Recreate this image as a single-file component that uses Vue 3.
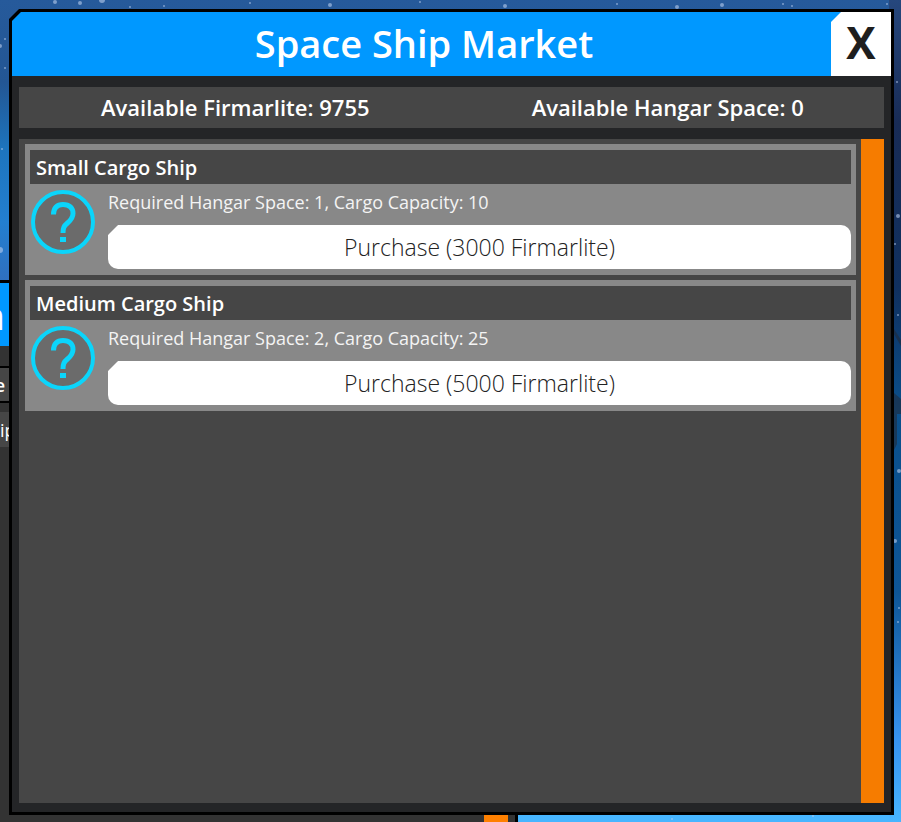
<script setup>
import { ref } from 'vue'

const firmarlite = ref(9755)
const hangarSpace = ref(0)
const open = ref(true)

const ships = [
  { id: 'small', name: 'Small Cargo Ship', space: 1, cargo: 10, price: 3000 },
  { id: 'medium', name: 'Medium Cargo Ship', space: 2, cargo: 25, price: 5000 }
]

// x, y, radius
const stars = [
  [55, 2, 2], [80, 3, 2], [102, 0, 3], [130, 7, 1], [164, 6, 1], [250, 3, 1], [330, 5, 2],
  [420, 2, 1], [505, 6, 2], [617, 4, 1], [677, 7, 2], [722, 5, 2], [783, 4, 1], [792, 6, 1],
  [887, 4, 1], [897, 82, 1], [5, 39, 1], [0, 46, 2], [5, 68, 1], [2, 149, 1], [0, 250, 3],
  [898, 216, 2], [895, 244, 1], [898, 315, 1], [899, 471, 2], [895, 541, 2], [899, 608, 1],
  [898, 622, 1], [672, 819, 1], [813, 816, 1]
]

const purchase = (ship) => {
  if (hangarSpace.value < ship.space || firmarlite.value < ship.price) return
  firmarlite.value -= ship.price
  hangarSpace.value -= ship.space
}
</script>

<template>
  <div class="space">
    <svg class="stars" aria-hidden="true">
      <circle v-for="(s, i) in stars" :key="i" :cx="s[0]" :cy="s[1]" :r="s[2]" />
      <path class="station" d="M894 329 L901 340 V346 L894 334 Z M894 393 L901 399 V414 H897 V444 L894 450 Z" />
    </svg>

    <!-- window behind the market -->
    <div class="back-window" aria-hidden="true">
      <div class="back-title"><span>n</span></div>
      <div class="back-row back-tab"><span>e</span></div>
      <div class="back-row back-item"><span>ip</span></div>
      <div class="back-scroll"></div>
    </div>

    <main v-if="open" class="window">
      <div class="frame">
        <header class="title-bar">
          <h1>Space Ship Market</h1>
          <button class="close" type="button" aria-label="Close" @click="open = false">X</button>
        </header>

        <div class="content">
          <div class="status">
            <span>Available Firmarlite: {{ firmarlite }}</span>
            <span>Available Hangar Space: {{ hangarSpace }}</span>
          </div>

          <div class="list">
            <div class="ships">
              <section v-for="ship in ships" :key="ship.id" class="ship">
                <h2>{{ ship.name }}</h2>
                <div class="ship-body">
                  <svg class="icon" viewBox="0 0 66 66" aria-hidden="true">
                    <circle cx="33" cy="33" r="30" fill="#6b6b6b" stroke="#0bd5fb" stroke-width="4" />
                    <path
                      d="M23.500 25.500 C23.500 19 27 15.500 33 15.500 C39.500 15.500 43 19 43 24.500 C43 28.500 41 31 37.500 34 C34 37 33 38.500 33 44"
                      fill="none" stroke="#0bd5fb" stroke-width="5"
                    />
                    <rect x="30" y="48" width="6" height="5" fill="#0bd5fb" />
                  </svg>
                  <div class="details">
                    <p>Required Hangar Space: {{ ship.space }}, Cargo Capacity: {{ ship.cargo }}</p>
                    <button class="buy" type="button" @click="purchase(ship)">
                      Purchase ({{ ship.price }} Firmarlite)
                    </button>
                  </div>
                </div>
              </section>
            </div>
            <div class="scrollbar"></div>
          </div>
        </div>
      </div>
    </main>
  </div>
</template>

<style>
body {
  margin: 0;
}
</style>

<style scoped>
.space {
  position: relative;
  box-sizing: border-box;
  display: flex;
  min-height: 100vh;
  padding: 9px 7px 7px 9px;
  overflow: hidden;
  font-family: "Open Sans", "Noto Sans", sans-serif;
  color: #fff;
  background:
    linear-gradient(#26477d, #182b55 15%, #10305f 35%, #0a4f8b 50%, #0e5596 72%, #3793f0 90%, transparent) right / 12px 100% no-repeat,
    linear-gradient(#265a9b, #235694 10%, #1d74bd 18%, #237fd0 27%, #2f70c0 34%, #47b5ff 60%);
}

.stars {
  position: absolute;
  inset: 0;
  width: 100%;
  height: 100%;
  fill: #b9cdee;
  opacity: 0.6;
}

.station {
  fill: #202a3a;
}

.back-window {
  position: absolute;
  top: 280px;
  bottom: 0;
  left: 0;
  width: 515px;
  background: #333;
  border-top: 3px solid #000;
  border-right: 3px solid #000;
}

.back-title,
.back-row {
  display: flex;
  align-items: center;
  justify-content: flex-end;
  width: 5px;
  padding-right: 504px;
  font-weight: 600;
}

.back-title {
  height: 63px;
  margin-bottom: 10px;
  background: #0098ff;
  font-size: 38px;
  line-height: 60px;
}

.back-row {
  font-size: 18px;
}

.back-tab {
  height: 33px;
  margin-top: 20px;
  border-top: 2px solid #000;
  border-bottom: 2px solid #000;
  background: #464646;
}

.back-item {
  justify-content: flex-start;
  height: 35px;
  margin-top: 9px;
  background: #464646;
  font-weight: 400;
}

.back-scroll {
  position: absolute;
  right: 7px;
  bottom: 0;
  width: 24px;
  height: 40px;
  background: #ff8000;
}

.window {
  position: relative;
  display: flex;
  flex: 1;
  padding: 3px;
  background: #000;
  clip-path: polygon(10px 0, 100% 0, 100% 100%, 0 100%, 0 10px);
}

.frame {
  display: flex;
  flex: 1;
  flex-direction: column;
  background: #242527;
  clip-path: polygon(9px 0, 100% 0, 100% 100%, 0 100%, 0 9px);
}

.title-bar {
  display: flex;
  height: 64px;
  background: #0098ff;
}

h1 {
  flex: 1;
  margin: 0;
  padding-left: 5px;
  font-size: 38px;
  font-weight: 600;
  line-height: 62px;
  text-align: center;
}

.close {
  width: 60px;
  padding: 0 0 4px;
  border: 0;
  background: #fff;
  clip-path: polygon(10px 0, 100% 0, 100% 100%, 0 100%, 0 10px);
  color: #1e1e1e;
  font: 700 44px/60px "Open Sans", sans-serif;
  cursor: pointer;
}

.content {
  display: flex;
  flex: 1;
  flex-direction: column;
  gap: 11px;
  padding: 11px 7px 9px;
}

.status {
  display: grid;
  grid-template-columns: 1fr 1fr;
  background: #464646;
  font-size: 22px;
  font-weight: 600;
  line-height: 41px;
  text-align: center;
}

.list {
  display: flex;
  flex: 1;
  background: #464646;
}

.ships {
  display: flex;
  flex: 1;
  flex-direction: column;
  gap: 5px;
  padding: 5px 5px 5px 6px;
}

.ship {
  padding: 6px 5px;
  background: #888;
}

h2 {
  margin: 0;
  padding: 2px 6px 0;
  background: #464646;
  font-size: 20px;
  font-weight: 600;
  line-height: 32px;
}

.ship-body {
  display: flex;
  gap: 12px;
}

.icon {
  flex: none;
  width: 66px;
  height: 66px;
  margin-top: 5px;
}

.details {
  flex: 1;
}

p {
  margin: 0;
  padding: 4px 0 9px;
  color: #f4f4f4;
  font-size: 18px;
  line-height: 28px;
}

.buy {
  display: block;
  width: 100%;
  height: 44px;
  padding: 0;
  border: 0;
  border-radius: 10px;
  background: #fff;
  clip-path: polygon(10px 0, 100% 0, 100% 100%, 0 100%, 0 10px);
  color: #222;
  font: 300 23px/44px "Open Sans", sans-serif;
  cursor: pointer;
}

.scrollbar {
  width: 23px;
  background: #f67c00;
}
</style>
